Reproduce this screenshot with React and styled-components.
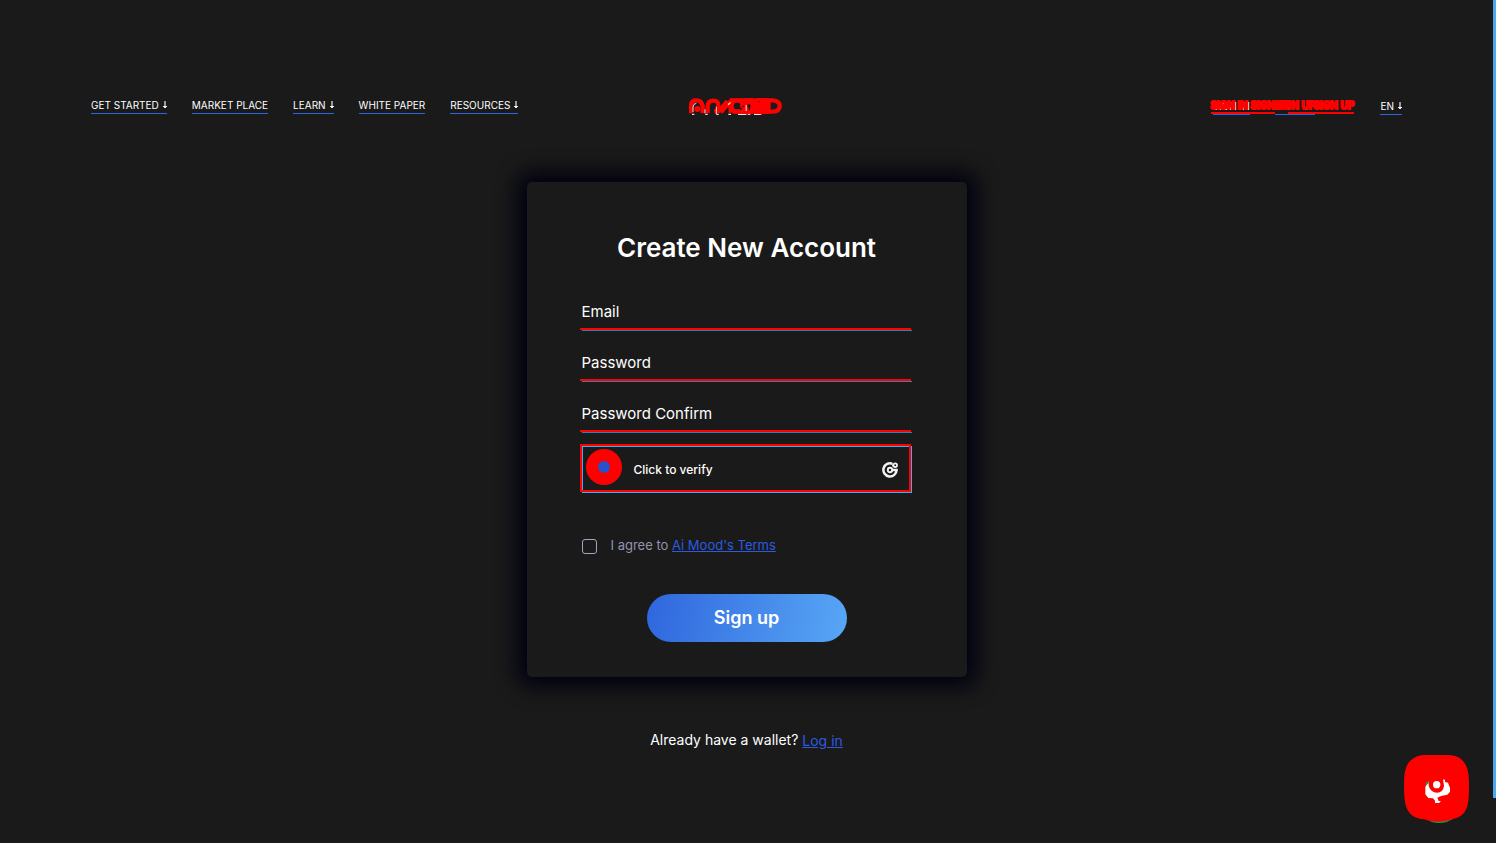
import React from "react";
import styled, { createGlobalStyle } from "styled-components";

const GlobalStyle = createGlobalStyle`
  * { box-sizing: border-box; }
  html, body { margin: 0; background: #1a1a1a; }
  body { font-family: Inter, "Liberation Sans", sans-serif; color: #fff; }
`;

const Page = styled.div`
  min-height: 100vh;
  padding-right: 3px;
  display: flex;
  flex-direction: column;
`;

const ScrollBar = styled.div`
  position: fixed;
  top: 0;
  right: 0;
  width: 3px;
  height: calc(100vh - 45px);
  background: #4aa8f0;
`;

const Header = styled.header`
  display: grid;
  grid-template-columns: 1fr auto 1fr;
  align-items: start;
  padding: 98px 91px 0;
  height: 116px;
`;

const Nav = styled.nav`
  display: flex;
  gap: 25px;
`;

const NavLink = styled.a`
  display: flex;
  gap: 4px;
  height: 16px;
  font-size: 10px;
  font-weight: 400;
  line-height: 15px;
  white-space: nowrap;
  color: #fff;
  text-decoration: none;
  border-bottom: 1px solid #2f66dd;
`;

const Tools = styled.div`
  display: flex;
  justify-content: flex-end;
  gap: 65px;
  padding-top: 1px;
`;

const Account = styled.div`
  position: relative;
  display: flex;
  gap: 25px;
`;

const Marks = styled.div`
  position: absolute;
  top: -2px;
  left: -2px;
  display: grid;
  grid-template-columns: 40px 24px 39px 40px;
  font-size: 10px;
  font-weight: 600;
  line-height: 16px;
  white-space: nowrap;
  color: #f00;
  -webkit-text-stroke: 2px #f00;
`;

const Mark = styled.span`
  height: 17px;
  background: linear-gradient(#f00, #f00) right bottom / ${(p) => p.$rule} 2px no-repeat;
`;

const LogoLink = styled.a`
  display: block;
  height: 18px;
  margin-right: 22px;
`;

const Main = styled.main`
  display: flex;
  flex-direction: column;
  align-items: center;
  padding-top: 66px;
`;

const Card = styled.form`
  width: 440px;
  max-width: 100%;
  display: flex;
  flex-direction: column;
  padding: 50px 55px 35px;
  border-radius: 5px;
  background: #1a1a1a;
  box-shadow: 0 0 20px 10px #020210;
`;

const Title = styled.h1`
  margin: 0 0 29px;
  font-size: 26px;
  font-weight: 600;
  line-height: 32px;
  text-align: center;
  white-space: nowrap;
`;

const Fields = styled.div`
  display: flex;
  flex-direction: column;
  gap: 13px;
`;

const Field = styled.label`
  position: relative;
  display: block;
  height: 38px;
  border-bottom: 1px solid #3c7cb5;
  &::after {
    content: "";
    position: absolute;
    left: -2px;
    right: 1px;
    bottom: 0;
    height: 2px;
    background: #f00;
  }
`;

const Input = styled.input`
  display: block;
  width: 100%;
  height: 37px;
  padding: 0;
  border: 0;
  outline: 0;
  background: transparent;
  font: 400 15px/20px Inter, "Liberation Sans", sans-serif;
  color: #fff;
  &::placeholder { color: #fff; opacity: 1; }
`;

const Verify = styled.button`
  position: relative;
  display: flex;
  align-items: center;
  gap: 12px;
  height: 47px;
  padding: 0 13px 0 3px;
  border: 1px solid #4aa8f0;
  background: transparent;
  font: 500 12px/16px Inter, "Liberation Sans", sans-serif;
  color: #fff;
  &::after {
    content: "";
    position: absolute;
    inset: -3px 0 0 -3px;
    border: 2px solid #f00;
  }
`;

const VerifyText = styled.span`
  flex: 1;
  text-align: left;
`;

const RadarSvg = styled.svg`
  margin-bottom: 5px;
`;

const Agree = styled.div`
  display: flex;
  align-items: center;
  gap: 14px;
  height: 20px;
  margin: 43px 0 38px;
  font-size: 13px;
  line-height: 18px;
  color: #9393ac;
`;

const AgreeLabel = styled.label`
  padding-bottom: 2px;
`;

const Check = styled.input`
  appearance: none;
  width: 15px;
  height: 15px;
  margin: 0;
  border: 1px solid #a5a3bd;
  border-radius: 3px;
`;

const TextLink = styled.a`
  color: #2c5ae0;
  text-decoration: underline;
`;

const Submit = styled.button`
  align-self: center;
  width: 200px;
  height: 48px;
  border: 0;
  border-radius: 24px;
  background: linear-gradient(100deg, #2f66dd, #58a7f6);
  font: 600 18px/24px Inter, "Liberation Sans", sans-serif;
  color: #fff;
`;

const Login = styled.p`
  display: flex;
  gap: 4px;
  margin: 53px 0 0;
  font-size: 14px;
  line-height: 20px;
`;

const LoginLink = styled(TextLink)`
  padding-top: 1px;
`;

const Chat = styled.button`
  position: fixed;
  right: 27px;
  bottom: 20px;
  width: 65px;
  height: 68px;
  padding: 0;
  border: 0;
  background: transparent;
`;

const ArrowSvg = styled.svg`
  margin-top: 3px;
`;

function Arrow() {
  return (
    <ArrowSvg width="4" height="7" viewBox="0 0 4 7" aria-hidden="true">
      <path d="M1 0h2v5H1z" fill="#999" />
      <path d="M0 5h4v1H3v1H1V6H0z" fill="#eee" />
    </ArrowSvg>
  );
}

function Logo() {
  return (
    <svg width="93" height="18" viewBox="27 24 279 54" aria-hidden="true">
      <g fill="none" stroke="#e8e8e8" strokeWidth="4">
        <path d="M36 73H43M76 73H83M109 73H116M145 73H153M174 73h25M203 73h8M222 73h22" />
      </g>
      <g fill="none" stroke="#f00" strokeWidth="13">
        <path d="M33 70V48Q33 31 49 31T68 48V70" />
        <path d="M83 70V50Q83 32 100 32T115 50V70" />
        <path d="M103 65Q125 60 142 33M122 67L152 34V68" />
        <circle cx="172" cy="48" r="17" />
        <circle cx="207" cy="48" r="15" strokeWidth="20" />
        <circle cx="242" cy="48" r="14" strokeWidth="22" />
        <path d="M245 31H278Q299 32 299 48T278 65H245" />
        <path d="M265 32V65M188 30V68M222 30V68" strokeWidth="14" />
        <path d="M158 31H268M158 65H268" />
        <path d="M242 38V62" strokeWidth="18" />
      </g>
      <circle cx="52" cy="57" r="9" fill="#f00" />
      <path d="M39 66V51Q40 41 49 40M75 70V58M109 72V50" fill="none" stroke="#ddd" strokeWidth="3" />
      <path d="M180 53h5v6h-5zM187 47h6v5h-6zM206 44h4v17h-4zM235 33h4v4h-4z" fill="#1a1a1a" />
      <path d="M143 42l9-6v4l-7 6zM197 45h3v18h-3z" fill="#eee" />
    </svg>
  );
}

function Radar() {
  return (
    <RadarSvg width="36" height="37" viewBox="0 0 36 37" aria-hidden="true">
      <circle cx="19" cy="19" r="17" fill="#173263" />
      <circle cx="18" cy="18" r="18" fill="#f00" />
      <circle cx="18" cy="18" r="6" fill="#2a50cc" />
    </RadarSvg>
  );
}

function VerifyLogo() {
  return (
    <svg width="16" height="16" viewBox="0 0 16 16" fill="none" stroke="#f2f2f2" aria-hidden="true">
      <path d="M10.5 1.8A6.6 6.6 0 1 0 14.6 8H9.5" strokeWidth="2.5" />
      <circle cx="8" cy="8" r="2.2" strokeWidth="1.9" />
      <path d="M10 3.4L12 3.4" strokeWidth="1.6" />
      <circle cx="13.2" cy="3.2" r="1.8" strokeWidth="1.8" />
    </svg>
  );
}

function ChatIcon() {
  return (
    <svg width="65" height="68" viewBox="42 45 195 204" aria-hidden="true">
      <path d="M110 236L125 246Q147 252 170 246L190 236Z" fill="#13a04c" />
      <path d="M101 45H178Q222 47 233 91Q238 111 237 145Q237 190 229 207Q219 231 186 238Q166 246 147 245Q119 245 103 238Q61 236 49 201Q42 184 42 137Q42 104 46 91Q55 50 101 45Z" fill="#f00" />
      <path d="M106 141L116 124V138Q123 158 141 158T162 138L159 118L165 120V126L174 128L180 144V155L172 164L153 168L142 173L146 183L153 184L147 189H135V182L129 175L115 174L106 163Z" fill="#fff" />
      <path d="M107 137V130L116 123V130Z" fill="#13a04c" />
      <circle cx="140" cy="134" r="11" fill="#fff" />
    </svg>
  );
}

const navItems = [
  { label: "GET STARTED", arrow: true },
  { label: "MARKET PLACE" },
  { label: "LEARN", arrow: true },
  { label: "WHITE PAPER" },
  { label: "RESOURCES", arrow: true },
];

const fields = [
  { label: "Email", type: "email" },
  { label: "Password", type: "password" },
  { label: "Password Confirm", type: "password" },
];

export default function App() {
  return (
    <Page>
      <GlobalStyle />
      <Header>
        <Nav>
          {navItems.map((item) => (
            <NavLink href="#" key={item.label}>
              {item.label}
              {item.arrow && <Arrow />}
            </NavLink>
          ))}
        </Nav>
        <LogoLink href="#" aria-label="Ai Mood">
          <Logo />
        </LogoLink>
        <Tools>
          <Account>
            <NavLink href="#">SIGN IN</NavLink>
            <NavLink href="#">SIGN UP</NavLink>
            <Marks aria-hidden="true">
              <Mark $rule="100%">SIGN IN</Mark>
              <Mark $rule="100%">SIGN UP</Mark>
              <Mark $rule="26px">SIGN UP</Mark>
              <Mark $rule="100%">SIGN UP</Mark>
            </Marks>
          </Account>
          <NavLink href="#">
            EN
            <Arrow />
          </NavLink>
        </Tools>
      </Header>
      <Main>
        <Card>
          <Title>Create New Account</Title>
          <Fields>
            {fields.map((f) => (
              <Field key={f.label}>
                <Input type={f.type} placeholder={f.label} aria-label={f.label} />
              </Field>
            ))}
            <Verify type="button">
              <Radar />
              <VerifyText>Click to verify</VerifyText>
              <VerifyLogo />
            </Verify>
          </Fields>
          <Agree>
            <Check type="checkbox" id="agree" />
            <AgreeLabel htmlFor="agree">
              I agree to <TextLink href="#">Ai Mood's Terms</TextLink>
            </AgreeLabel>
          </Agree>
          <Submit type="submit">Sign up</Submit>
        </Card>
        <Login>
          Already have a wallet? <LoginLink href="#">Log in</LoginLink>
        </Login>
      </Main>
      <Chat type="button" aria-label="Chat">
        <ChatIcon />
      </Chat>
      <ScrollBar />
    </Page>
  );
}
